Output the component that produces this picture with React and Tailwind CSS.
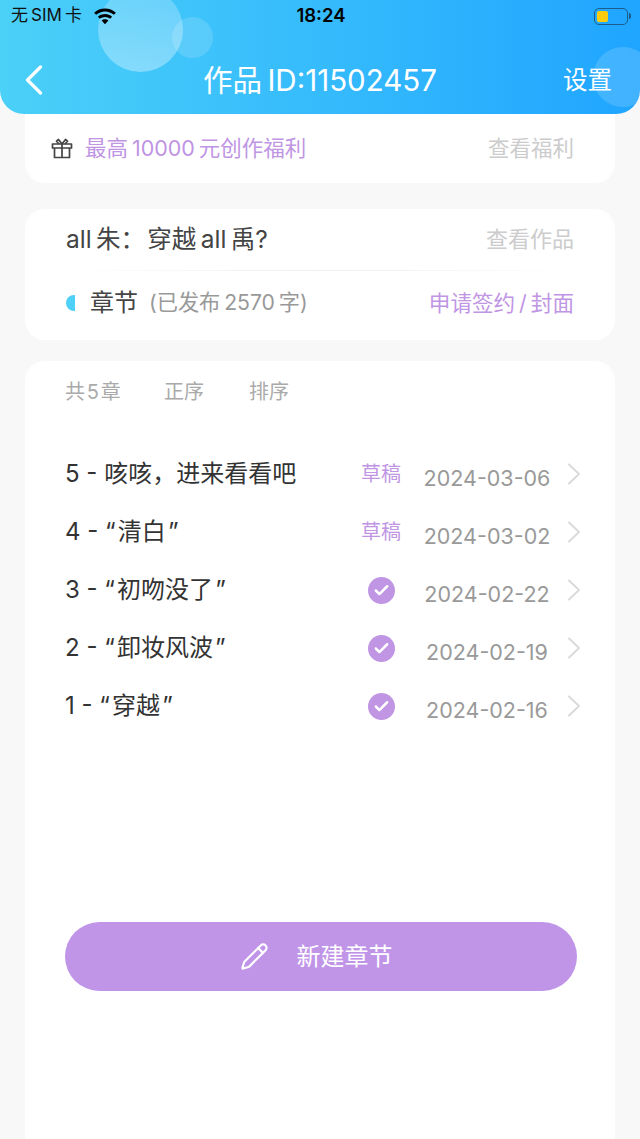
import { Pencil, Check } from 'lucide-react';

const font = 'font-["Inter","Noto_Sans_CJK_SC",sans-serif]';

const chapters = [
  { title: '5 - 咳咳，进来看看吧', draft: true, date: '2024-03-06' },
  { title: '4 - “\u200a清白\u200a”', draft: true, date: '2024-03-02' },
  { title: '3 - “\u200a初吻没了\u200a”', draft: false, date: '2024-02-22' },
  { title: '2 - “\u200a卸妆风波\u200a”', draft: false, date: '2024-02-19' },
  { title: '1 - “\u200a穿越\u200a”', draft: false, date: '2024-02-16' },
];

function WifiIcon() {
  return (
    <svg width="24" height="18" viewBox="0 0 24 18" className="text-black">
      <path d="M12 1.500c4.200 0 8 1.600 10.900 4.200l-2 2.100C18.500 5.700 15.400 4.400 12 4.400S5.500 5.700 3.100 7.800l-2-2.100C4 3.100 7.800 1.500 12 1.500z" fill="currentColor" />
      <path d="M12 7c2.700 0 5.200 1 7.100 2.700l-2 2.100c-1.400-1.200-3.200-1.900-5.100-1.900s-3.700.7-5.100 1.900l-2-2.100C6.800 8 9.300 7 12 7z" fill="currentColor" />
      <path d="M12 12.300c1.300 0 2.500.5 3.400 1.200L12 17.200l-3.400-3.700c.9-.7 2.100-1.200 3.400-1.200z" fill="currentColor" />
    </svg>
  );
}

function Battery() {
  return (
    <div className="flex items-center gap-[1px]">
      <div className="w-[34px] h-[17px] rounded-[5px] border border-[#1c5c8c] p-[2px]">
        <div className="w-[11px] h-full rounded-[2px] bg-[#fbcc0e]" />
      </div>
      <div className="w-[2px] h-[6px] rounded-r-full bg-[#1c5c8c]" />
    </div>
  );
}

function BackIcon() {
  return (
    <svg width="18" height="30" viewBox="0 0 18 30" fill="none" stroke="currentColor" strokeWidth="3.200" strokeLinecap="round" strokeLinejoin="round">
      <path d="M15.500 2 2.500 15l13 13" />
    </svg>
  );
}

function RowChevron() {
  return (
    <svg width="14" height="22" viewBox="0 0 14 22" fill="none" stroke="#dadada" strokeWidth="2" strokeLinecap="round" strokeLinejoin="round">
      <path d="M2 1.500 12 11 2 20.500" />
    </svg>
  );
}

function GiftIcon() {
  return (
    <svg width="22" height="21" viewBox="0 0 22 21" fill="none" stroke="#444" strokeWidth="1.700" strokeLinejoin="round">
      <path d="M1.500 6h19v4h-19zM3.500 10v9.500h15V10M11 6v13.500" />
      <path d="M11 6 7.500 1.500 5.500 3.200 8 6M11 6l3.500-4.500 2 1.700L14 6" />
    </svg>
  );
}

function Header() {
  return (
    <header className="relative z-10 h-[114px] rounded-b-[24px] overflow-hidden bg-gradient-to-r from-[#4bd0f8] to-[#1fa5ff]">
      <div className="absolute left-[98px] top-[-13px] w-[85px] h-[85px] rounded-full bg-gradient-to-b from-white/20 to-white/35" />
      <div className="absolute left-[172px] top-[17px] w-[41px] h-[41px] rounded-full bg-white/15" />
      <div className="absolute right-[-13px] top-[47px] w-[60px] h-[60px] rounded-full bg-white/15" />
      <div className="relative flex items-center h-[32px] pl-[11px] pr-[9px]">
        <div className="flex-1 flex items-center">
          <span className="text-[17px] text-[#111] w-[82px] whitespace-nowrap">无&thinsp;SIM&thinsp;卡</span>
          <WifiIcon />
        </div>
        <span className="text-[18.500px] font-semibold text-black">18:24</span>
        <div className="flex-1 flex justify-end">
          <Battery />
        </div>
      </div>
      <div className="relative flex items-center justify-between h-[66px] mt-[15px] pl-[25px] pr-[28px] text-white">
        <BackIcon />
        <h1 className="absolute inset-x-0 text-center text-[29.500px] leading-[40px]">作品&thinsp;ID:11502457</h1>
        <span className="text-[24.500px]">设置</span>
      </div>
    </header>
  );
}

function ChapterRow({ chapter }) {
  return (
    <div className="flex items-center h-[58px]">
      <span className="flex-1 text-[24px] text-[#333] whitespace-nowrap">{chapter.title}</span>
      <div className="w-[44px] mr-[2px] flex justify-center">
        {chapter.draft ? (
          <span className="text-[20px] text-[#c095e4]">草稿</span>
        ) : (
          <span className="flex items-center justify-center w-[27px] h-[27px] rounded-full bg-[#c095e4]">
            <Check size={17} strokeWidth={3.500} className="text-white" />
          </span>
        )}
      </div>
      <span className="w-[162px] pt-2 pl-[2px] text-center text-[21.500px] text-[#999]">{chapter.date}</span>
      <RowChevron />
    </div>
  );
}

export default function App() {
  return (
    <div className={`${font} w-[640px] h-[1139px] overflow-hidden bg-[#f8f8f8]`}>
      <Header />
      <main className="px-[25px]">
        <section className="flex items-center justify-between h-[69px] rounded-b-[20px] bg-white pl-[26px] pr-[41px]">
          <div className="flex items-center gap-[12px]">
            <GiftIcon />
            <span className="text-[21.500px] text-[#c095e4]">最高&thinsp;10000&thinsp;元创作福利</span>
          </div>
          <span className="text-[21.500px] text-[#ccc]">查看福利</span>
        </section>

        <section className="mt-[26px] h-[131px] rounded-[20px] bg-white pl-[41px] pr-[41px]">
          <div className="flex items-center justify-between h-[61px]">
            <span className="text-[24.500px] text-[#444]">all&thinsp;朱：&#8202;穿越&thinsp;all&thinsp;禹?</span>
            <span className="text-[22px] text-[#ccc]">查看作品</span>
          </div>
          <div className="h-px bg-gradient-to-r from-transparent via-[#eeeeee] to-transparent" />
          <div className="flex items-center justify-between h-[64px]">
            <div className="flex items-center">
              <span className="w-[9px] h-[16px] rounded-l-full rounded-r-[2px] bg-[#4fd0f7]" />
              <span className="ml-[15px] text-[24px] text-[#444]">章节</span>
              <span className="ml-[11px] text-[21.200px] text-[#999]">(已发布&thinsp;2570&thinsp;字)</span>
            </div>
            <span className="text-[21.600px] text-[#c095e4]">申请签约&thinsp;/&thinsp;封面</span>
          </div>
        </section>

        <section className="mt-[21px] h-[800px] rounded-[20px] bg-white px-[40px]">
          <div className="flex items-center h-[62px] text-[20px] text-[#aaa]">
            <span className="w-[99px]">共&#8202;5&#8202;章</span>
            <span className="w-[85px]">正序</span>
            <span>排序</span>
          </div>
          <div className="mt-[22px] -mr-[6px]">
            {chapters.map((chapter) => (
              <ChapterRow key={chapter.date} chapter={chapter} />
            ))}
          </div>
          <button className="mt-[187px] flex items-center justify-center gap-[28px] w-[512px] h-[69px] pr-[10px] rounded-full bg-[#c095e8] text-[24px] text-white">
            <Pencil size={29} strokeWidth={1.800} />
            新建章节
          </button>
        </section>
      </main>
    </div>
  );
}
